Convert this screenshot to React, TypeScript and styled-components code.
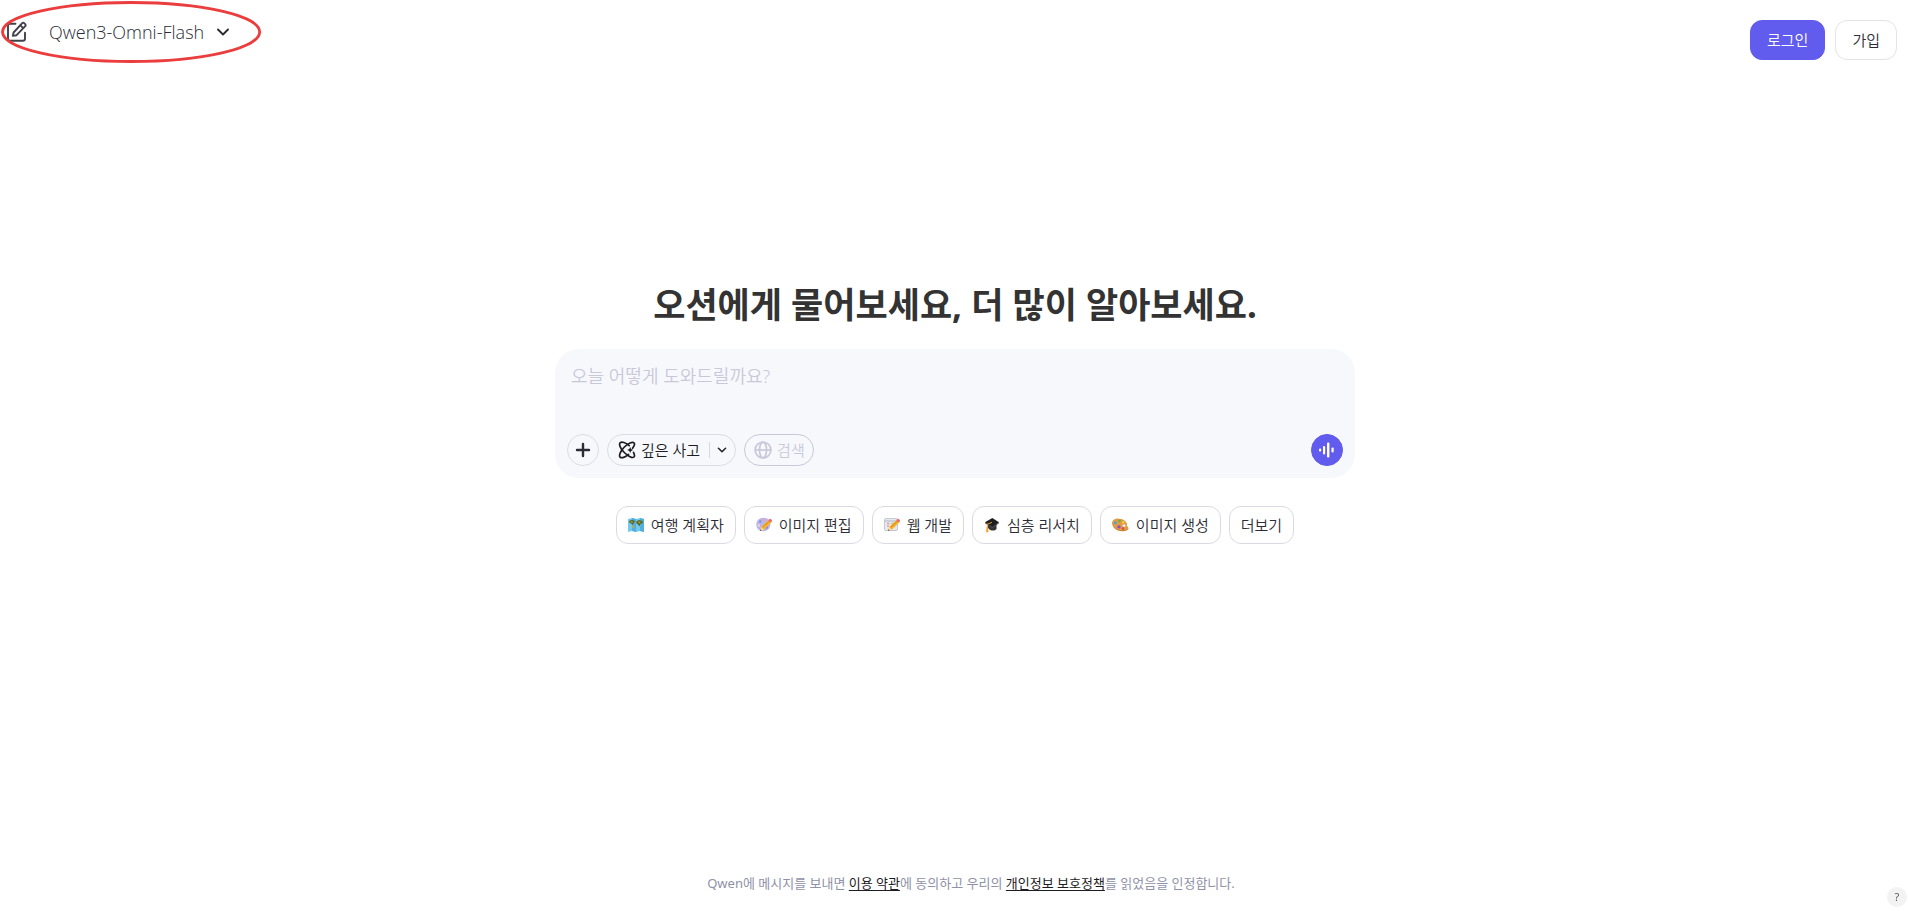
import React from "react";
import styled, { createGlobalStyle, css } from "styled-components";

const GlobalStyle = createGlobalStyle`
  *, *::before, *::after { box-sizing: border-box; }
  body {
    margin: 0;
    background: #ffffff;
    color: #2c2c36;
    font-family: "Noto Sans", "Noto Sans CJK KR", sans-serif;
    font-weight: 350;
  }
  button, textarea { font-family: inherit; font-weight: inherit; }
  button { cursor: pointer; }
`;

const Page = styled.div`
  display: flex;
  flex-direction: column;
  min-height: 100vh;
`;

const Header = styled.header`
  display: flex;
  justify-content: space-between;
  align-items: flex-start;
  padding-right: 11px;
`;

const ModelArea = styled.div`
  position: relative;
  display: flex;
  align-items: center;
  gap: 21px;
  height: 64px;
  padding: 0 32px 0 6px;
`;

const Highlight = styled.svg`
  position: absolute;
  inset: 0;
  width: 100%;
  height: 100%;
  overflow: visible;
  pointer-events: none;
`;

const PlainButton = styled.button`
  display: flex;
  align-items: center;
  padding: 0;
  border: 0;
  background: none;
  color: #40414a;
`;

const ModelButton = styled(PlainButton)`
  gap: 12px;
  color: #2c2c36;
  font: 300 18px/24px "Open Sans", sans-serif;
`;

const AuthArea = styled.nav`
  display: flex;
  gap: 10px;
  padding-top: 20px;
`;

const AuthButton = styled.button<{ $primary?: boolean }>`
  height: 40px;
  padding: 0 16px;
  border: 1px solid #e4e4e8;
  border-radius: 12px;
  background: #ffffff;
  color: #2c2c36;
  font-size: 15px;
  line-height: 24px;
  ${(p) =>
    p.$primary &&
    css`
      border-color: #615ced;
      background: #615ced;
      color: #ffffff;
    `}
`;

const Main = styled.main`
  display: flex;
  flex: 1;
  flex-direction: column;
  align-items: center;
  justify-content: center;
  padding: 0 0 112px 2px;
`;

const Title = styled.h1`
  margin: 0 0 20px;
  color: #333333;
  font-size: 35px;
  font-weight: 700;
  line-height: 48px;
`;

const Composer = styled.form`
  display: flex;
  flex-direction: column;
  width: 100%;
  max-width: 800px;
  padding: 12px;
  border-radius: 24px;
  background: #f7f8fc;
`;

const Prompt = styled.textarea`
  height: 73px;
  padding: 3px 4px;
  border: 0;
  outline: 0;
  resize: none;
  background: transparent;
  color: #2c2c36;
  font-size: 18px;
  line-height: 24px;
  &::placeholder { color: #c8c8da; opacity: 1; }
`;

const Tools = styled.div`
  display: flex;
  align-items: center;
  gap: 8px;
`;

const RoundButton = styled.button<{ $filled?: boolean }>`
  display: flex;
  align-items: center;
  justify-content: center;
  width: 32px;
  height: 32px;
  padding: 0;
  border: 1px solid ${(p) => (p.$filled ? "#615ced" : "#dcdce6")};
  border-radius: 50%;
  background: ${(p) => (p.$filled ? "#615ced" : "transparent")};
  color: ${(p) => (p.$filled ? "#ffffff" : "#2c2c36")};
`;

const Pill = styled.div`
  display: flex;
  align-items: center;
  height: 32px;
  border: 1px solid #dcdce6;
  border-radius: 16px;
`;

const PillButton = styled(PlainButton)`
  gap: 5px;
  height: 30px;
  padding: 0 9px 0 10px;
  color: #1c1c22;
  font-size: 15px;
`;

const MenuButton = styled(PlainButton)`
  height: 16px;
  padding: 0 8px 0 7px;
  border-left: 1px solid #d8d8e2;
  color: #26262e;
`;

const SearchButton = styled(PillButton)`
  height: 32px;
  padding: 0 8px 0 9px;
  border: 1px solid #c8c8da;
  border-radius: 16px;
  color: #c8c8da;
`;

const Label = styled.span`
  padding-bottom: 1px;
  line-height: 20px;
`;

const Spacer = styled.span`
  flex: 1;
`;

const Suggestions = styled.div`
  display: flex;
  flex-wrap: wrap;
  justify-content: center;
  gap: 8px;
  margin-top: 28px;
`;

const Chip = styled.button`
  display: flex;
  align-items: center;
  gap: 7px;
  height: 38px;
  padding: 0 11px;
  border: 1px solid #dadae6;
  border-radius: 12px;
  background: #ffffff;
  color: #2c2c36;
  font-size: 15px;
`;

const Footer = styled.footer`
  padding: 0 0 18px 34px;
  color: #8f91a8;
  font-size: 13px;
  font-weight: 400;
  line-height: 20px;
  text-align: center;
`;

const FooterLink = styled.a`
  color: #1c1c22;
  text-decoration: underline;
  text-underline-offset: 2px;
`;

const HelpButton = styled.button`
  position: fixed;
  right: 1px;
  bottom: 4px;
  width: 20px;
  height: 20px;
  padding: 0;
  border: 0;
  border-radius: 50%;
  background: #f3f3f3;
  color: #5c5c5c;
  font-size: 11px;
  font-weight: 400;
  line-height: 20px;
`;

const EditIcon = () => (
  <svg width="22" height="22" viewBox="0 0 22 22" fill="none" stroke="currentColor" strokeWidth="1.9" strokeLinecap="round" strokeLinejoin="round">
    <path d="M9.5 2.7H4A2 2 0 0 0 2 4.7v13a2 2 0 0 0 2 2h13a2 2 0 0 0 2-2v-6" />
    <path d="M7.6 11.5 16.2 2.2a1.4 1.4 0 0 1 2 0l1 1a1.4 1.4 0 0 1 0 2L10.6 14.2l-3.8.7z" />
    <path d="m14.4 4.3 2.8 2.8" />
  </svg>
);

const Chevron = ({ size, weight }: { size: number; weight: number }) => (
  <svg width={size} height={size} viewBox="0 0 14 14" fill="none" stroke="currentColor" strokeWidth={weight} strokeLinecap="round" strokeLinejoin="round">
    <path d="m2 4.5 5 5 5-5" />
  </svg>
);

const PlusIcon = () => (
  <svg width="16" height="16" viewBox="0 0 16 16" stroke="currentColor" strokeWidth="2.4" strokeLinecap="round">
    <path d="M8 2v12M2 8h12" />
  </svg>
);

const ThinkIcon = () => (
  <svg width="18" height="18" viewBox="0 0 18 18" fill="none" stroke="currentColor" strokeWidth="1.7" strokeLinecap="round">
    <path d="M14.600 7.200C16.400 4.700 17 2.600 16 1.800 14.400.400 10.200 2.200 6.400 6S.600 14.700 2.100 16.100c1.500 1.400 5.100.300 8.400-2.700" />
    <path d="M11.200 4.600C7.600 1.600 3.600.300 2.100 1.800.600 3.300 2.500 7.700 6.300 11.500s8.200 6 9.700 4.500c.9-.9.500-2.600-.5-4.600" />
    <path d="m12.200 6 .9 2.100 2.100.9-2.100.9-.9 2.100-.9-2.100-2.100-.9 2.100-.9z" fill="currentColor" stroke="none" />
  </svg>
);

const GlobeIcon = () => (
  <svg width="18" height="18" viewBox="0 0 18 18" fill="none" stroke="currentColor" strokeWidth="1.7">
    <circle cx="9" cy="9" r="7.900" />
    <ellipse cx="9" cy="9" rx="3.500" ry="7.900" />
    <path d="M1.200 9h15.600" />
  </svg>
);

const VoiceIcon = () => (
  <svg width="16" height="16" viewBox="0 0 16 16" fill="currentColor">
    <rect x="0" y="6.500" width="2.200" height="3" rx="1" />
    <rect x="4" y="4" width="2.200" height="8.500" rx="1" />
    <rect x="8" y="0.500" width="2.400" height="15" rx="1" />
    <rect x="12.500" y="5.500" width="2.200" height="5" rx="1" />
  </svg>
);

const MapIcon = () => (
  <svg width="16" height="16" viewBox="0 0 16 16">
    <path d="M0 2 4 1l4 1 4-1 4 1v13l-4-1-4 1-4-1-4 1z" fill="#74caee" />
    <path d="M4 1v13l4 1V2zM12 1v13l4 1V2z" fill="#52aedb" />
    <path d="M1 4 4 2.800l3 1.200-1.300 2L4.500 8 3 6.500 1.200 5.500zM8.500 4.200 11 3l4 1.200-.8 2.300-2 .5-.7 2.500-1.700-2-1.600-1.500z" fill="#5b6b25" />
    <path d="m4.500 8 1.700 1.200-1 2.300-.9-1z" fill="#dca531" />
    <path d="m2 4.200 3 .3-1 1.500M10 4.500l3 .5-2 1.500" fill="#d0a33a" />
  </svg>
);

const Pencil = () => (
  <g>
    <path d="m5.300 9.700 7.800-7.200 2.600 2.600-7.500 7.500-3.700 1z" fill="#f6b52d" />
    <path d="m6.500 10.500 7.700-7" stroke="#d98213" strokeWidth="1" />
    <path d="m12.200 3.300 1.300-1.200a1 1 0 0 1 1.400 0l.9.900a1 1 0 0 1 0 1.400l-1.200 1.200z" fill="#f06d76" />
    <path d="m5.200 9.800 2.900 2.900-3.900 1z" fill="#f4d4a0" />
    <path d="m4.500 12.200-.5 1.700 1.600-.500z" fill="#444" />
  </g>
);

const ImageEditIcon = () => (
  <svg width="16" height="16" viewBox="0 0 16 16">
    <path d="M7.500.800C3 .800.300 4 .300 7.800c0 4 3 6.400 6.800 6.400 4.500 0 7.300-3.200 7.300-7C14.400 3.600 11.600.800 7.500.800z" fill="#b9b5e8" />
    <circle cx="4.300" cy="4.500" r="1.300" fill="#7e92ed" />
    <circle cx="8.300" cy="3" r="1.200" fill="#f0a0b4" />
    <circle cx="2.800" cy="8.500" r="1.200" fill="#eed6f4" />
    <circle cx="10.500" cy="10.500" r="1.400" fill="#8b87d8" />
    <Pencil />
  </svg>
);

const WebIcon = () => (
  <svg width="16" height="16" viewBox="0 0 16 16">
    <rect x=".5" y="1.500" width="13" height="12" rx="1.500" fill="#e7e9ef" stroke="#c4c9d5" />
    <path d="M1 4h12" stroke="#aeb6c8" />
    <path d="M3 6.500h2.500M3 9h2" stroke="#e69da5" strokeWidth="1.400" />
    <path d="M7 6.500h3" stroke="#a7cdb9" strokeWidth="1.400" />
    <Pencil />
  </svg>
);

const GraduateIcon = () => (
  <svg width="16" height="16" viewBox="0 0 16 16">
    <path d="M4 6.500v4.500c2 3 6.500 3.500 8.500 1V6z" fill="#333338" />
    <path d="M1 5.200 8.300 1l6.700 4.300-6.700 5z" fill="#1e1e22" />
    <path d="m1 5.200 7.300 4.500 6.700-4.400v1l-6.700 4.900L1 6.200z" fill="#48484f" />
    <path d="M8 5.400 3.300 7.200v5.300" fill="none" stroke="#e49a28" strokeWidth="1" />
    <path d="M2.700 10h1.300l.5 5.200H2z" fill="#f0a42e" />
  </svg>
);

const PaletteIcon = () => (
  <svg width="17" height="16" viewBox="0 0 17 16">
    <path d="M6 1.800C2.500 1.800.300 3.500.300 6.500c0 4.500 5.200 7.700 9.800 7.700 3.800 0 6.300-1.200 6.300-2.700 0-1.200-1.200-1.700-1.500-2.800-.3-1.400.2-2-.9-3.500-1.400-2-4.400-3.400-8-3.400z" fill="#cc8130" />
    <path d="M6 1.800C2.500 1.800.300 3.500.300 6c0 4 5.200 7.200 9.800 7.200 3.600 0 5.900-.7 6.300-2-.4-1-1.200-1.400-1.500-2.500-.3-1.400.2-2-.9-3.500-1.400-2-4.400-3.400-8-3.400z" fill="#e39a45" />
    <ellipse cx="12" cy="8.700" rx="1.500" ry="1.100" fill="#fff" />
    <circle cx="3.300" cy="5.700" r="1.500" fill="#42a9ce" />
    <circle cx="7.500" cy="4" r="1.300" fill="#6cad43" />
    <circle cx="11.200" cy="5.300" r="1.200" fill="#edd03e" />
    <circle cx="6.900" cy="9.900" r="1.700" fill="#8a51c8" />
    <circle cx="11" cy="11.600" r="1.300" fill="#d94d48" />
  </svg>
);

const suggestions = [
  { label: "여행 계획자", Icon: MapIcon },
  { label: "이미지 편집", Icon: ImageEditIcon },
  { label: "웹 개발", Icon: WebIcon },
  { label: "심층 리서치", Icon: GraduateIcon },
  { label: "이미지 생성", Icon: PaletteIcon },
];

export default function App() {
  return (
    <Page>
      <GlobalStyle />
      <Header>
        <ModelArea>
          <PlainButton type="button" aria-label="새 채팅"><EditIcon /></PlainButton>
          <ModelButton type="button">
            Qwen3-Omni-Flash
            <Chevron size={14} weight={1.9} />
          </ModelButton>
          <Highlight viewBox="0 0 262 64" preserveAspectRatio="none" aria-hidden="true">
            <ellipse cx="131" cy="32" rx="128.500" ry="29.500" fill="none" stroke="#eb3d3d" strokeWidth="2.800" />
          </Highlight>
        </ModelArea>
        <AuthArea>
          <AuthButton type="button" $primary>로그인</AuthButton>
          <AuthButton type="button">가입</AuthButton>
        </AuthArea>
      </Header>
      <Main>
        <Title>오션에게 물어보세요, 더 많이 알아보세요.</Title>
        <Composer onSubmit={(e) => e.preventDefault()}>
          <Prompt aria-label="메시지" placeholder="오늘 어떻게 도와드릴까요?" />
          <Tools>
            <RoundButton type="button" aria-label="추가"><PlusIcon /></RoundButton>
            <Pill>
              <PillButton type="button"><ThinkIcon /><Label>깊은 사고</Label></PillButton>
              <MenuButton type="button" aria-label="사고 옵션"><Chevron size={10} weight={2.2} /></MenuButton>
            </Pill>
            <SearchButton type="button"><GlobeIcon /><Label>검색</Label></SearchButton>
            <Spacer />
            <RoundButton type="button" aria-label="음성" $filled><VoiceIcon /></RoundButton>
          </Tools>
        </Composer>
        <Suggestions>
          {suggestions.map(({ label, Icon }) => (
            <Chip type="button" key={label}><Icon /><Label>{label}</Label></Chip>
          ))}
          <Chip type="button"><Label>더보기</Label></Chip>
        </Suggestions>
      </Main>
      <Footer>
        Qwen에 메시지를 보내면 <FooterLink href="#terms">이용 약관</FooterLink>에 동의하고 우리의 <FooterLink href="#privacy">개인정보 보호정책</FooterLink>를 읽었음을 인정합니다.
      </Footer>
      <HelpButton type="button" aria-label="도움말">?</HelpButton>
    </Page>
  );
}
